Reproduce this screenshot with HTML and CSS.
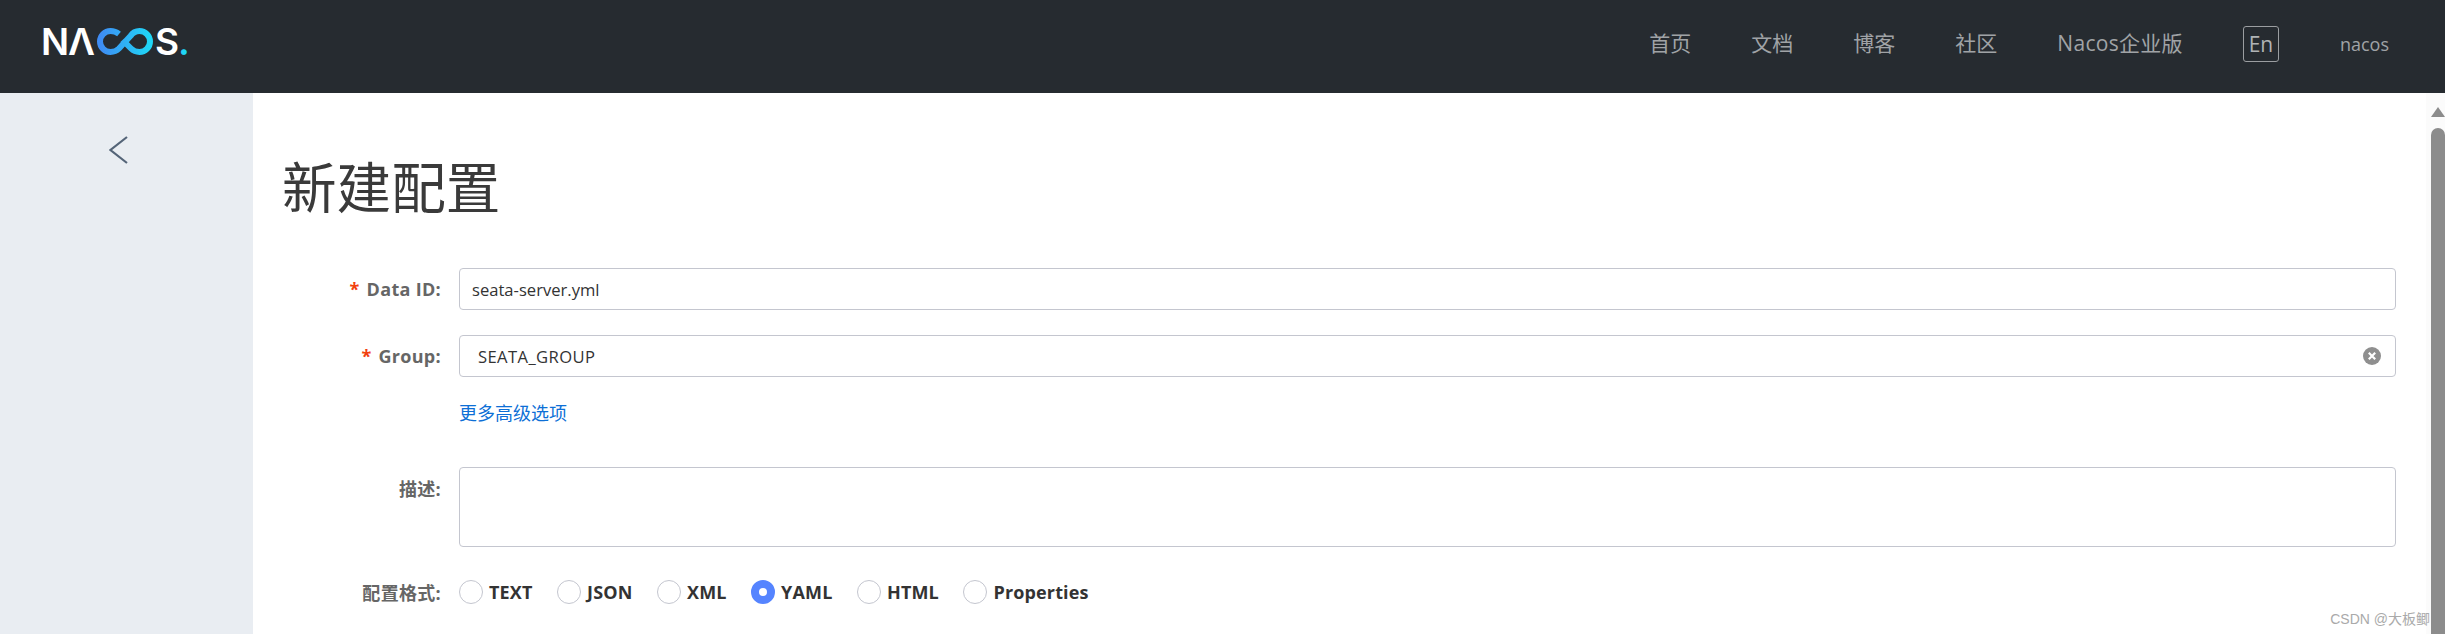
FILE: index.html
```html
<!DOCTYPE html>
<html lang="zh-CN">
<head>
<meta charset="UTF-8">
<meta name="viewport" content="width=device-width, initial-scale=1.0">
<title>新建配置</title>
<link rel="stylesheet" href="styles.css">
</head>
<body>
  <nav class="navbar">
    <a class="logo" href="#">
      <span class="logo-text">NΛ</span>
      <svg class="logo-mark" viewBox="0 0 56 27" width="56" height="27">
        <defs>
          <linearGradient id="logoFill" x1="0" y1="0" x2="1" y2="0">
            <stop offset="0" stop-color="#3f8cf4"/>
            <stop offset="1" stop-color="#1fd6f6"/>
          </linearGradient>
        </defs>
        <path d="M22 6C19.5 4 17 3 13.5 3A10.5 10.5 0 0 0 13.5 24C17 24 20 22.5 22 20.5L33.5 8C35.5 5 39 3 42.5 3A10.5 10.5 0 0 1 42.5 24C39 24 36 22.5 34 20.5L25.5 12" fill="none" stroke="url(#logoFill)" stroke-width="6"/>
      </svg>
      <span class="logo-text">S<i class="logo-dot">.</i></span>
    </a>
    <ul class="nav-links">
      <li><a href="#">首页</a></li>
      <li><a href="#">文档</a></li>
      <li><a href="#">博客</a></li>
      <li><a href="#">社区</a></li>
      <li><a class="nav-ent" href="#">Nacos企业版</a></li>
    </ul>
    <span class="lang">En</span>
    <span class="user">nacos</span>
  </nav>

  <div class="page">
    <aside class="sidebar">
      <svg class="back" viewBox="0 0 19 28" width="19" height="28">
        <path d="M18 1L1.5 14L18 27" fill="none" stroke="#546478" stroke-width="2.2"/>
      </svg>
    </aside>

    <main class="content">
      <h1>新建配置</h1>
      <form class="form">
        <label class="form-label"><em>*</em> Data ID:</label>
        <input class="field" type="text" value="seata-server.yml">

        <label class="form-label"><em>*</em> Group:</label>
        <div class="field select">
          <span>SEATA_GROUP</span>
          <svg class="clear" viewBox="0 0 18 18" width="18" height="18">
            <circle cx="9" cy="9" r="9" fill="#8f8f8f"/>
            <path d="M5.8 5.8L12.2 12.2M12.2 5.8L5.8 12.2" stroke="#fff" stroke-width="2.2"/>
          </svg>
        </div>

        <span></span>
        <a class="more" href="#">更多高级选项</a>

        <label class="form-label desc-label">描述:</label>
        <textarea class="field desc"></textarea>

        <label class="form-label format-row">配置格式:</label>
        <div class="radios format-row">
          <label class="radio"><input type="radio" name="format">TEXT</label>
          <label class="radio"><input type="radio" name="format">JSON</label>
          <label class="radio"><input type="radio" name="format">XML</label>
          <label class="radio"><input type="radio" name="format" checked>YAML</label>
          <label class="radio"><input type="radio" name="format">HTML</label>
          <label class="radio"><input type="radio" name="format">Properties</label>
        </div>
      </form>
    </main>

    <div class="scrollbar">
      <span class="scroll-up"></span>
      <span class="scroll-thumb"></span>
    </div>
  </div>

  <span class="watermark">CSDN @大板鲫</span>
</body>
</html>
```

FILE: styles.css
```css
html, body {
  height: 100%;
  margin: 0;
  overflow: hidden;
}

body {
  font-family: "Open Sans", "Noto Sans CJK SC", sans-serif;
  font-size: 16px;
  color: #333;
  background-color: #fff;
}

.navbar {
  display: flex;
  align-items: center;
  box-sizing: border-box;
  height: 93px;
  padding: 0 0 5px 41px;
  background-color: #262b30;
}

.logo {
  display: flex;
  align-items: center;
  margin-bottom: 5px;
  font-family: Inter, sans-serif;
  font-size: 37px;
  font-weight: 600;
  line-height: 27px;
  color: #fff;
  text-decoration: none;
}

.logo-text {
  letter-spacing: -1px;
}

.logo-mark {
  margin: 0 2px 0 3px;
}

.logo-dot {
  font-style: normal;
  color: #1fd6f6;
}

.nav-links {
  display: flex;
  gap: 60px;
  margin: 0 0 0 auto;
  padding: 0 0 4px;
  list-style: none;
}

.nav-links a {
  color: #a0a3a6;
  font-size: 21px;
  text-decoration: none;
}

.nav-links .nav-ent {
  letter-spacing: 0.3px;
}

.lang {
  display: flex;
  justify-content: center;
  align-items: center;
  box-sizing: border-box;
  width: 36px;
  height: 36px;
  margin-left: 60px;
  border: 1px solid #9b9ea1;
  border-radius: 3px;
  color: #b0b3b5;
  font-size: 21px;
}

.user {
  margin: 0 56px 0 61px;
  color: #a0a3a6;
  font-size: 18px;
}

.page {
  display: flex;
  height: 541px;
}

.sidebar {
  flex: none;
  width: 253px;
  box-sizing: border-box;
  padding: 43px 0 0 109px;
  background-color: #e9edf2;
}

.content {
  flex: 1;
  padding: 0 30px;
}

h1 {
  margin: 64px 0 51px -1px;
  font-size: 54.6px;
  font-weight: 400;
  line-height: 60px;
  color: #3a3a3a;
}

.form {
  display: grid;
  grid-template-columns: 158px 1fr;
  column-gap: 18px;
  row-gap: 25px;
}

.form-label {
  align-self: center;
  text-align: right;
  font-size: 18px;
  font-weight: 700;
  letter-spacing: 0.3px;
  color: #666;
}

.form-label em {
  margin-right: 2px;
  font-style: normal;
  color: #f1400e;
}

.field {
  box-sizing: border-box;
  width: 100%;
  height: 42px;
  padding: 0 12px;
  border: 1px solid #c4c6cf;
  border-radius: 4px;
  font-family: inherit;
  font-size: 16.6px;
  color: #333;
}

.select {
  display: flex;
  align-items: center;
  justify-content: space-between;
  padding: 0 14px 0 18px;
  letter-spacing: 0.4px;
}

.more {
  margin-bottom: 18px;
  font-size: 18px;
  line-height: 22px;
  color: #0d6fd6;
  text-decoration: none;
}

.desc {
  display: block;
  height: 80px;
  resize: none;
}

.desc-label {
  align-self: start;
  padding-top: 8px;
}

.format-row {
  margin-top: 7px;
}

.radios {
  display: flex;
}

.radio {
  display: flex;
  align-items: center;
  gap: 6px;
  margin-right: 24.5px;
  font-size: 18px;
  font-weight: 700;
  letter-spacing: 0.15px;
  line-height: 24px;
  color: #333;
}

.radio input {
  appearance: none;
  box-sizing: border-box;
  width: 24px;
  height: 24px;
  margin: 0;
  border: 1px solid #c4c6cf;
  border-radius: 50%;
  background-color: #fff;
}

.radio input:checked {
  border: 8.5px solid #5584ff;
}

.scrollbar {
  display: flex;
  flex-direction: column;
  flex: none;
  align-items: flex-end;
  width: 19px;
  background-color: #fbfbfb;
}

.scroll-up {
  flex: none;
  width: 0;
  height: 0;
  margin: 14px 0 11px;
  border-left: 7px solid transparent;
  border-right: 7px solid transparent;
  border-bottom: 10px solid #8c8c8c;
}

.scroll-thumb {
  flex: 1;
  width: 14px;
  border-radius: 7px 7px 0 0;
  background-color: #8c8c8c;
}

.watermark {
  position: absolute;
  right: 15px;
  bottom: 6px;
  font-family: "Liberation Sans", "Noto Sans CJK SC", sans-serif;
  font-size: 14px;
  color: #aaa;
}
```
